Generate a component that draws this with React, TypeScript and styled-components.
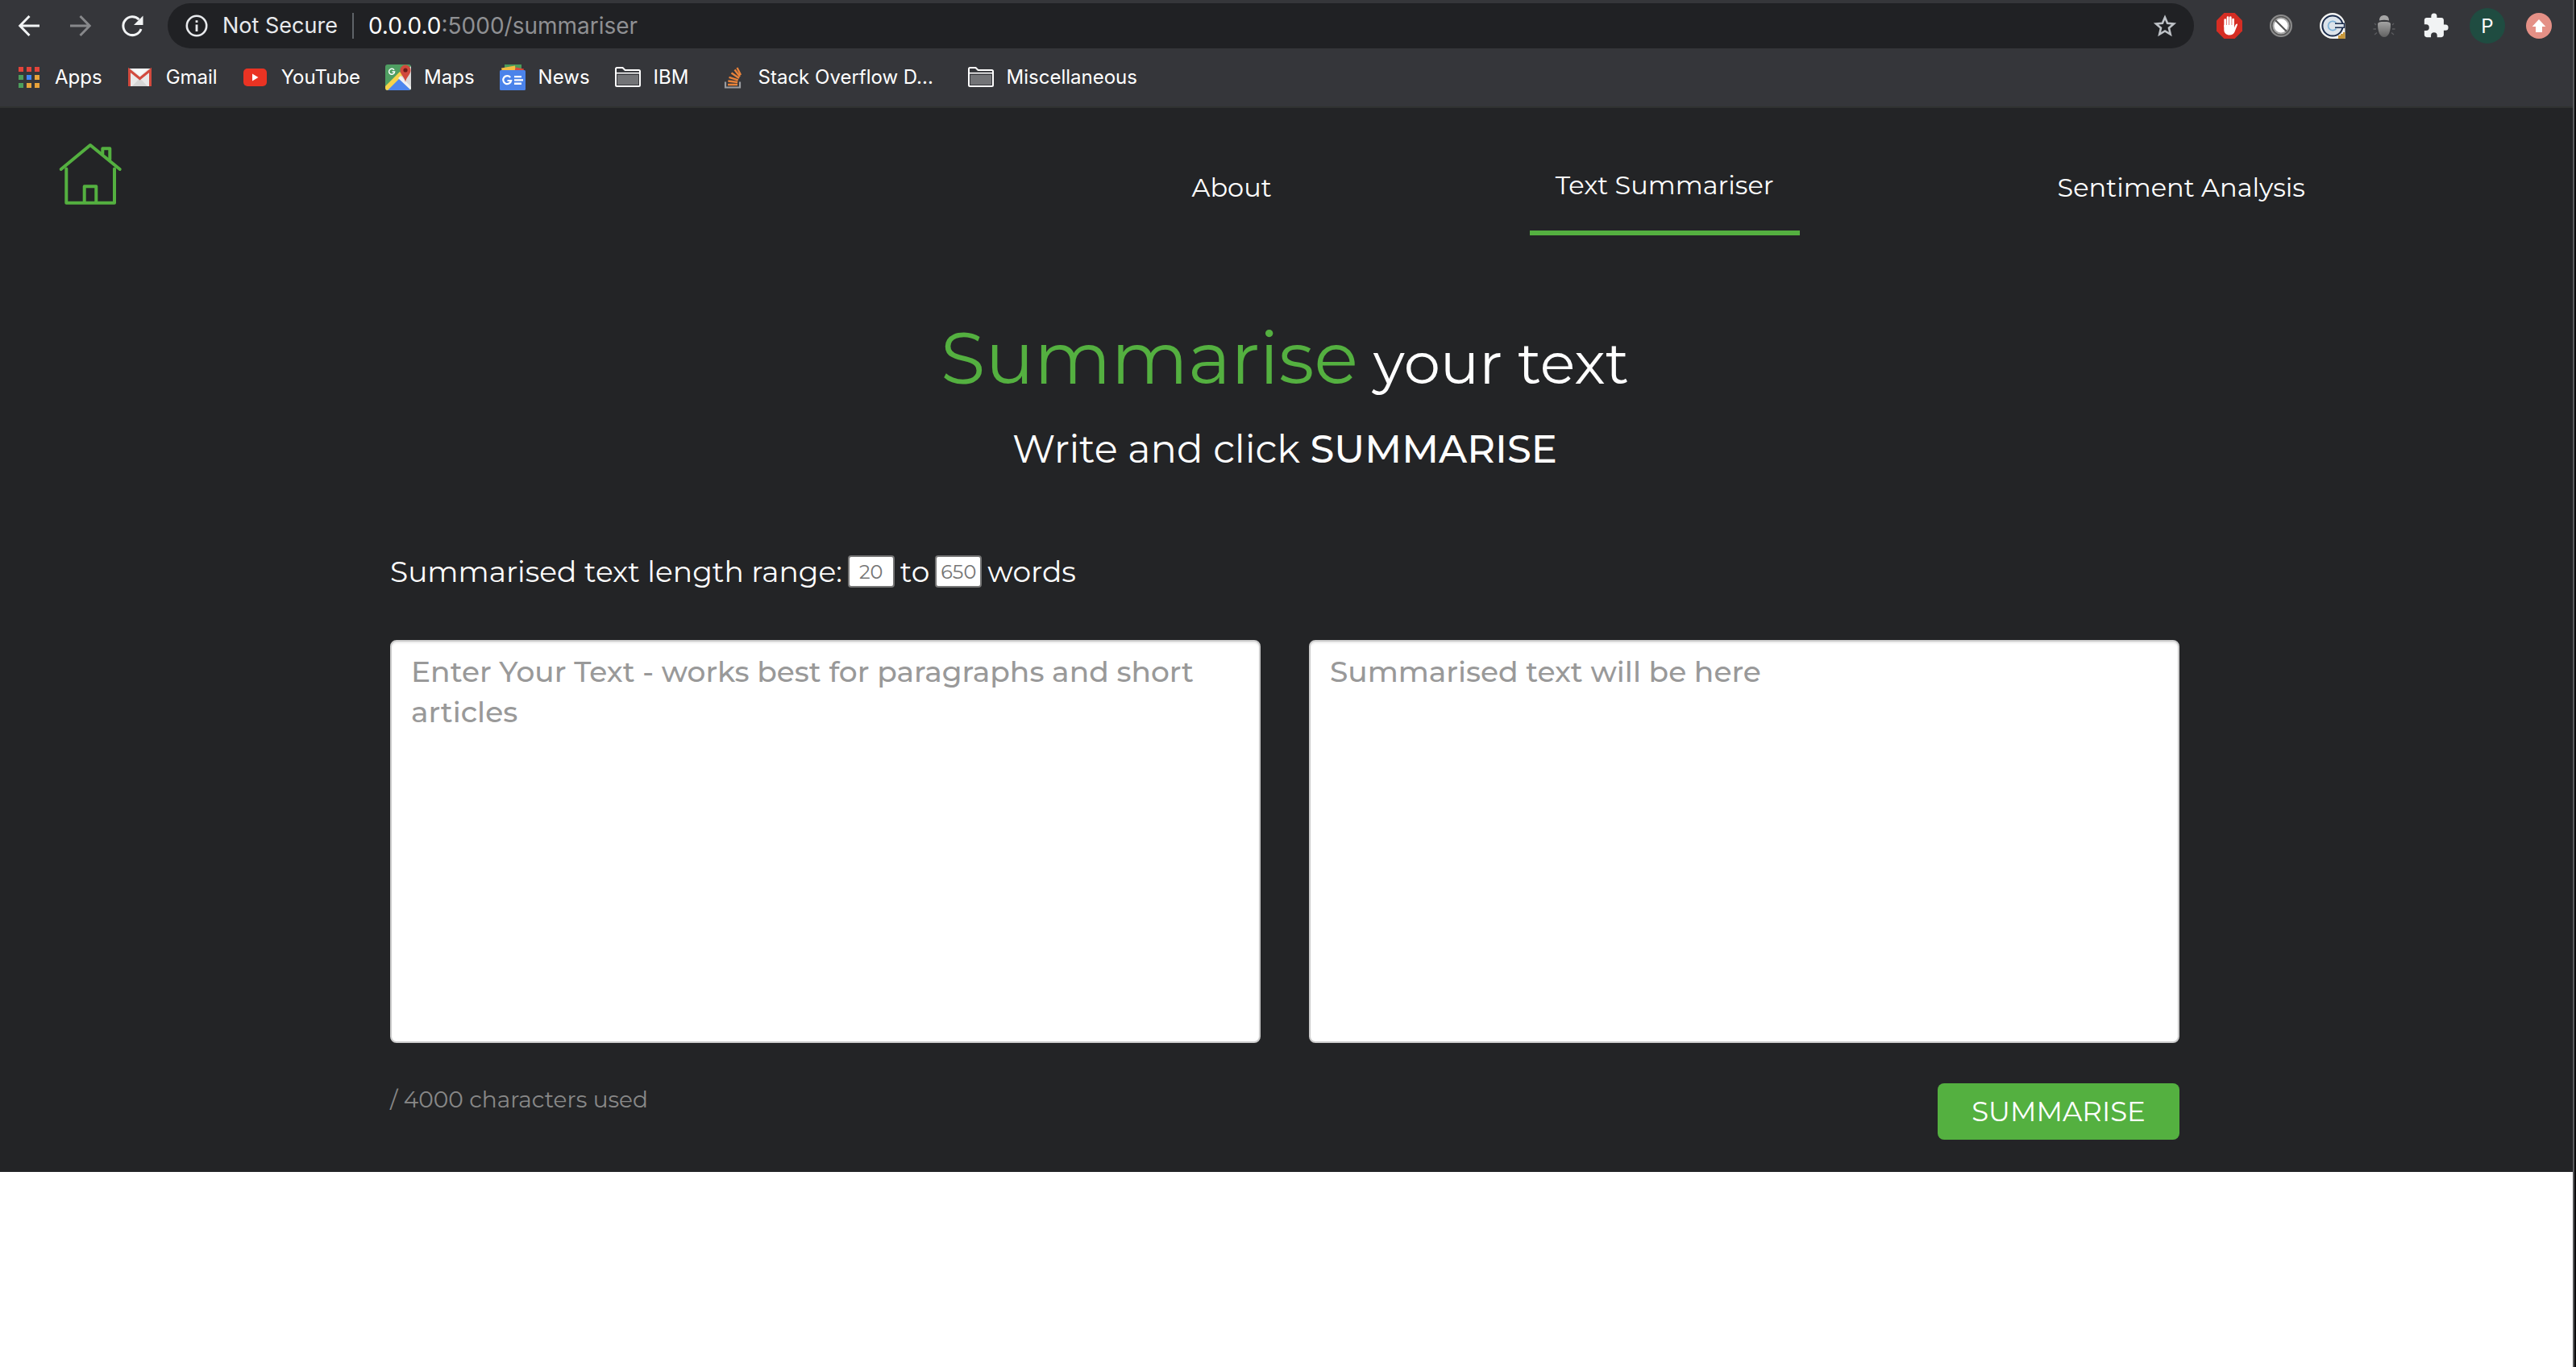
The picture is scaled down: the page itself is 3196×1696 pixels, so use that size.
import React from "react";
import styled, { createGlobalStyle } from "styled-components";

const GREEN = "#54b040";
const DARK = "#232426";
const CHROME_FONT = `Inter, "Liberation Sans", sans-serif`;
const PAGE_FONT = `Montserrat, "DejaVu Sans", sans-serif`;

const GlobalStyle = createGlobalStyle`
  *, *::before, *::after { box-sizing: border-box; }
  body { margin: 0; background: #ffffff; }
  svg { display: block; }
`;

const Window = styled.div`
  display: flex;
  min-height: 100vh;
`;

const Screen = styled.div`
  flex: 1;
  min-width: 0;
`;

const WindowEdge = styled.div`
  flex: none;
  width: 4px;
  background: #0b0b0c;
  border-left: 2px solid #57585a;
`;

/* ---------- Browser chrome ---------- */

const Browser = styled.header`
  background: #35363a;
  border-bottom: 2px solid #303231;
  color: #ffffff;
  font-family: ${CHROME_FONT};
`;

const Toolbar = styled.div`
  display: flex;
  align-items: center;
  height: 64px;
  padding: 0 20px;
`;

const IconButton = styled.button<{ $size?: number }>`
  display: flex;
  flex: none;
  align-items: center;
  justify-content: center;
  width: ${(p) => p.$size ?? 32}px;
  height: ${(p) => p.$size ?? 32}px;
  padding: 0;
  border: 0;
  background: none;
  color: inherit;
`;

const History = styled.div`
  display: flex;
  gap: 32px;
  margin-right: 28px;
`;

const Omnibox = styled.div`
  display: flex;
  flex: 1;
  align-items: center;
  gap: 18px;
  height: 56px;
  padding: 0 20px;
  border-radius: 28px;
  background: #202124;
  font-size: 28px;
  line-height: 32px;
`;

const Security = styled.span`
  color: #e8eaed;
  font-size: 27px;
`;

const Divider = styled.span`
  width: 2px;
  height: 32px;
  background: #5f6368;
`;

const Url = styled.span`
  flex: 1;
  color: #ffffff;
`;

const UrlPath = styled.span`
  color: #8f9093;
`;

const Extensions = styled.div`
  display: flex;
  gap: 20px;
  margin-left: 22px;
`;

const Profile = styled.button`
  width: 44px;
  height: 44px;
  padding: 0;
  border: 0;
  border-radius: 50%;
  background: #1f4c41;
  color: #ffffff;
  font: 24px ${CHROME_FONT};
`;

const Bookmarks = styled.nav`
  display: flex;
  gap: 31px;
  height: 68px;
  padding: 0 20px 4px;
  align-items: center;
`;

const Bookmark = styled.a<{ $minWidth?: number }>`
  display: flex;
  align-items: center;
  gap: 16px;
  min-width: ${(p) => p.$minWidth ?? 0}px;
  color: #ffffff;
  font-size: 24px;
  line-height: 32px;
  text-decoration: none;
  white-space: nowrap;
`;

/* ---------- Page ---------- */

const Page = styled.div`
  padding-right: 4px;
  padding-bottom: 40px;
  background: ${DARK};
  color: #ffffff;
  font-family: ${PAGE_FONT};
`;

const SiteHeader = styled.header`
  display: flex;
  align-items: flex-start;
  justify-content: space-between;
  padding: 40px 296px 0 72px;
`;

const HomeLink = styled.a`
  color: ${GREEN};
`;

const SiteNav = styled.nav`
  display: flex;
  align-items: center;
  gap: 288px;
`;

const NavLink = styled.a<{ $active?: boolean }>`
  padding: 32px;
  border-bottom: ${(p) => (p.$active ? `6px solid ${GREEN}` : "0")};
  color: #ffffff;
  font-size: 32px;
  line-height: 48px;
  text-decoration: none;
`;

const Main = styled.main`
  max-width: 2280px;
  margin: 0 auto;
  padding: 98px 30px 0;
`;

const Title = styled.h1`
  margin: 0;
  font-size: 72px;
  font-weight: 400;
  line-height: 1.2;
  text-align: center;
`;

const TitleAccent = styled.span`
  color: ${GREEN};
  font-size: 90px;
`;

const Subtitle = styled.p`
  margin: 30px 0 0;
  font-size: 48px;
  line-height: 58px;
  text-align: center;
`;

const Strong = styled.strong`
  font-weight: 500;
`;

const Range = styled.div`
  display: flex;
  align-items: center;
  gap: 7px;
  margin-top: 101px;
  font-size: 36px;
  line-height: 44px;
`;

const RangeInput = styled.input`
  width: 58px;
  height: 40px;
  padding: 0;
  border: 2px solid #767676;
  border-radius: 4px;
  background: #ffffff;
  color: #333333;
  font: 24px ${PAGE_FONT};
  text-align: center;
  &::placeholder { color: #757575; opacity: 1; }
`;

const Panels = styled.div`
  display: grid;
  grid-template-columns: 1fr 1fr;
  gap: 60px;
  margin-top: 63px;
`;

const TextPanel = styled.textarea`
  display: block;
  width: 100%;
  height: 500px;
  padding: 12px 24px;
  border: 2px solid #cccccc;
  border-radius: 8px;
  background: #ffffff;
  box-shadow: inset 0 2px 2px rgba(0, 0, 0, 0.075);
  color: #333333;
  font: 500 36px/50px ${PAGE_FONT};
  resize: none;
  &::placeholder { color: #999999; opacity: 1; }
`;

const Actions = styled.div`
  display: flex;
  align-items: flex-start;
  justify-content: space-between;
  margin-top: 50px;
`;

const Counter = styled.span`
  color: #888888;
  font-size: 28px;
  line-height: 40px;
`;

const Submit = styled.button`
  width: 300px;
  height: 70px;
  padding: 0;
  border: 0;
  border-radius: 8px;
  background: ${GREEN};
  color: #ffffff;
  font: 400 34px ${PAGE_FONT};
`;

/* ---------- Drawings ---------- */

const BackIcon = () => (
  <svg width="32" height="32" viewBox="0 0 32 32" fill="none" stroke="#f1f3f4" strokeWidth="3">
    <path d="M29 16H5M16.5 4 4.8 16l11.700 12" />
  </svg>
);
const ForwardIcon = () => (
  <svg width="32" height="32" viewBox="0 0 32 32" fill="none" stroke="#87888b" strokeWidth="3">
    <path d="M3 16h24M15.500 4 27.200 16l-11.700 12" />
  </svg>
);
const ReloadIcon = () => (
  <svg width="32" height="32" viewBox="0 0 32 32">
    <path d="M24.500 8.300A11.400 11.400 0 1 0 27 20" fill="none" stroke="#f1f3f4" strokeWidth="3" />
    <path d="M29.500 3.500V15H18z" fill="#f1f3f4" />
  </svg>
);
const InfoIcon = () => (
  <svg width="30" height="30" viewBox="0 0 30 30">
    <circle cx="16" cy="15" r="12.200" fill="none" stroke="#e8eaed" strokeWidth="2.600" />
    <path d="M14.600 8.200h2.800V11h-2.800zM14.600 13.400h2.800V22h-2.800z" fill="#e8eaed" />
  </svg>
);
const StarIcon = () => (
  <svg width="32" height="32" viewBox="0 0 32 32" fill="none" stroke="#bdc1c6" strokeWidth="2.600">
    <path d="M16 5.500l3.100 7.300 7.900.7-6 5.200 1.800 7.800-6.800-4.100-6.800 4.100 1.800-7.800-6-5.200 7.900-.7z" />
  </svg>
);
const AdBlockIcon = () => (
  <svg width="32" height="32" viewBox="0 0 32 32">
    <path d="M9.400 0h13.200L32 9.400v13.200L22.600 32H9.400L0 22.600V9.400z" fill="#d52d23" />
    <g stroke="#fff" strokeWidth="2.700" strokeLinecap="round" fill="none">
      <path d="M10.700 17V8.500M14 16V5.700M17.300 16V5.700M20.600 17V8" />
    </g>
    <path d="M9.300 15h12.700v3.500c1-3 2-4.800 3.200-4.900.8 0 .9.700.6 1.600L22.500 23.500c-1 2.500-3.500 4-6.300 4-4 0-6.900-2.500-6.900-6.500z" fill="#fff" />
  </svg>
);
const BlockedIcon = () => (
  <svg width="30" height="30" viewBox="0 0 30 30">
    <circle cx="15" cy="15" r="13" fill="#555" stroke="#8b8b8b" strokeWidth="2" />
    <circle cx="15" cy="15" r="9.500" fill="#fff" stroke="#a9a9a9" strokeWidth="2" />
    <path d="M8 8 22 22" stroke="#555" strokeWidth="2.200" />
  </svg>
);
const CIcon = () => (
  <svg width="32" height="32" viewBox="0 0 32 32">
    <path d="M16 0a16 16 0 1 0 0 32h15.500V16A15.700 15.700 0 0 0 16 0z" fill="#f4f4f2" />
    <circle cx="16" cy="16" r="12.600" fill="#dce3ea" stroke="#1b2c4c" strokeWidth="2" />
    <path d="M20.500 12.500a5.600 5.600 0 1 0 0 7" fill="none" stroke="#7fb2d8" strokeWidth="1.800" />
    <path d="M19 13.300h11.500v5H19" fill="#dce3ea" stroke="#1b2c4c" strokeWidth="1.400" />
    <path d="M31.500 24v8H23v-4h3v-2h3v-2z" fill="#c9983a" />
  </svg>
);
const BugIcon = () => (
  <svg width="32" height="32" viewBox="0 0 32 32">
    <defs>
      <linearGradient id="bugShell" x1="0" y1="0" x2="0" y2="1">
        <stop offset="0" stopColor="#a3a3a3" />
        <stop offset="1" stopColor="#616161" />
      </linearGradient>
    </defs>
    <path d="M10 9.500C10 5 12.500 3 16 3s6 2 6 6.500c-4-1-8-1-12 0z" fill="#a6a6a6" />
    <path d="M8 14c0-2.500 3-3 8-3s8 .5 8 3c0 9-2.500 16-8 16S8 23 8 14z" fill="url(#bugShell)" />
    <path d="M6 15l-2-2M26 15l2-2M6 20H2.500M26 20h3.500M7 24.500 4 27M25 24.500l3 2.500" stroke="#5b5c5f" strokeWidth="1.300" />
  </svg>
);
const PuzzleIcon = () => (
  <svg width="34" height="34" viewBox="0 0 24 24" fill="#f1f3f4">
    <path d="M20.500 11H19V7c0-1.100-.9-2-2-2h-4V3.500a2.500 2.500 0 0 0-5 0V5H4c-1.100 0-2 .9-2 2v3.800h1.500a2.700 2.700 0 0 1 0 5.400H2V20c0 1.100.9 2 2 2h3.800v-1.500a2.700 2.700 0 0 1 5.400 0V22H17c1.100 0 2-.9 2-2v-4h1.500a2.500 2.500 0 0 0 0-5z" />
  </svg>
);
const UpdateIcon = () => (
  <svg width="32" height="32" viewBox="0 0 32 32">
    <circle cx="16" cy="16" r="16" fill="#e49086" />
    <path d="M16 8l8.300 9H20v7h-8v-7H7.700z" fill="#fff" />
  </svg>
);

const AppsIcon = () => {
  const colors = ["#e2443a", "#e2443a", "#e2443a", "#4d9e5c", "#4285f4", "#e8a33a", "#4d9e5c", "#e8a33a", "#e8a33a"];
  return (
    <svg width="32" height="32" viewBox="0 0 32 32">
      {colors.map((c, i) => (
        <rect key={i} x={3 + (i % 3) * 10} y={3 + Math.floor(i / 3) * 10} width="6" height="6" fill={c} />
      ))}
    </svg>
  );
};
const GmailIcon = () => (
  <svg width="32" height="32" viewBox="0 0 32 32">
    <rect x="1" y="5" width="29" height="22" rx="2" fill="#e9e9e9" />
    <path d="M6 27 15.500 17 25 27z" fill="#d6d6d6" />
    <path d="M5 5h21L15.500 14.500z" fill="#f7f7f7" />
    <path d="M2.500 27V7l13 10.500L28.500 7v20" fill="none" stroke="#d24a3e" strokeWidth="3" />
  </svg>
);
const YouTubeIcon = () => (
  <svg width="32" height="32" viewBox="0 0 32 32">
    <rect x="1" y="5" width="29" height="22" rx="5" fill="#ea3323" />
    <path d="M12 11.500v9l7.500-4.500z" fill="#fff" />
  </svg>
);
const MapsIcon = () => (
  <svg width="32" height="32" viewBox="0 0 32 32">
    <clipPath id="mapTile"><rect width="32" height="32" rx="3" /></clipPath>
    <g clipPath="url(#mapTile)">
      <rect width="32" height="32" fill="#4f9e62" />
      <path d="M16 17 32 2v30z" fill="#d9d9d9" />
      <path d="M0 32 16.500 16 32 32z" fill="#4d86ee" />
      <path d="M0 32v-5L18 9l4 4L3 32z" fill="#f6d34c" />
      <path d="M16 17l3-3 13 14v4z" fill="#f2f2f2" />
    </g>
    <path d="M11 6.800a3.500 3.500 0 1 0 .6 2.200H8.500" fill="none" stroke="#fff" strokeWidth="1.500" />
    <path d="M25 22c-.5-6-6.500-9-6.500-15a6.500 6.500 0 0 1 13 0c0 6-6 9-6.500 15z" fill="#d0493c" />
    <circle cx="25" cy="7" r="2.600" fill="#6b1d18" />
  </svg>
);
const NewsIcon = () => (
  <svg width="32" height="32" viewBox="0 0 32 32">
    <path d="M6 0h21v8H6z" fill="#4a9c59" />
    <path d="M2 4.500 19 1.500 20 9H3z" fill="#f3bc42" />
    <path d="M20 3.500l10 2L29 9H18z" fill="#d8493c" />
    <rect y="7" width="32" height="25" rx="1.500" fill="#4b83ea" />
    <path d="M13.200 16a5 5 0 1 0 1 4H9.500" fill="none" stroke="#fff" strokeWidth="2.200" />
    <path d="M18 14h9v2.300h-9zM18 18.300h11v2.300H18zM18 22.600h9v2.300h-9z" fill="#fff" />
  </svg>
);
const FolderIcon = () => (
  <svg width="32" height="32" viewBox="0 0 32 32">
    <path d="M1 5.500Q1 4 2.500 4h7l3 3h17Q31 7 31 8.500v17q0 1.500-1.500 1.500h-27Q1 27 1 25.500z" fill="none" stroke="#fff" strokeWidth="2" />
    <path d="M2 10.700h28" stroke="#fff" strokeWidth="1.600" />
    <path d="M3 13h26v12H3z" fill="#737477" />
  </svg>
);
const StackIcon = () => (
  <svg width="32" height="32" viewBox="0 0 32 32" fill="none">
    <path d="M7 21.500v7h18v-7" stroke="#9a9ca0" strokeWidth="2.200" />
    <path d="M10 25h12M10.300 20.500l11.800 1.500M11.500 15.800l11.200 3.500M14.500 10.500l9.500 6.500M18.500 6.500l6.500 8.500M21.500 4l4.500 9" stroke="#e8823a" strokeWidth="2.400" />
  </svg>
);
const HouseIcon = () => (
  <svg width="80" height="84" viewBox="0 0 80 84" fill="none" stroke="currentColor" strokeWidth="4" strokeLinecap="round" strokeLinejoin="round">
    <path d="M3.700 36 40 6l36.700 30" />
    <path d="M10.300 35.500v42.200H70V35.500" />
    <path d="M32.700 77V57.300h14.600V77" />
    <path d="M55.300 17v-6.700h9V24" />
  </svg>
);

const bookmarks = [
  { label: "Apps", Icon: AppsIcon },
  { label: "Gmail", Icon: GmailIcon },
  { label: "YouTube", Icon: YouTubeIcon },
  { label: "Maps", Icon: MapsIcon },
  { label: "News", Icon: NewsIcon },
  { label: "IBM", Icon: FolderIcon, minWidth: 99 },
  { label: "Stack Overflow D...", Icon: StackIcon, minWidth: 277 },
  { label: "Miscellaneous", Icon: FolderIcon },
];

const extensions = [
  { name: "Ad blocker", Icon: AdBlockIcon },
  { name: "Content blocker", Icon: BlockedIcon },
  { name: "Citations", Icon: CIcon },
  { name: "Bug tracker", Icon: BugIcon },
  { name: "Extensions", Icon: PuzzleIcon },
];

export default function App() {
  return (
    <Window>
      <GlobalStyle />
      <Screen>
        <Browser>
          <Toolbar>
            <History>
              <IconButton aria-label="Back"><BackIcon /></IconButton>
              <IconButton aria-label="Forward"><ForwardIcon /></IconButton>
              <IconButton aria-label="Reload"><ReloadIcon /></IconButton>
            </History>
            <Omnibox>
              <InfoIcon />
              <Security>Not Secure</Security>
              <Divider />
              <Url>0.0.0.0<UrlPath>:5000/summariser</UrlPath></Url>
              <IconButton aria-label="Bookmark this page"><StarIcon /></IconButton>
            </Omnibox>
            <Extensions>
              {extensions.map(({ name, Icon }) => (
                <IconButton key={name} $size={44} aria-label={name}><Icon /></IconButton>
              ))}
              <Profile aria-label="Profile">P</Profile>
              <IconButton $size={44} aria-label="Update"><UpdateIcon /></IconButton>
            </Extensions>
          </Toolbar>
          <Bookmarks>
            {bookmarks.map(({ label, Icon, minWidth }) => (
              <Bookmark key={label} href="#" $minWidth={minWidth}><Icon />{label}</Bookmark>
            ))}
          </Bookmarks>
        </Browser>
        <Page>
          <SiteHeader>
            <HomeLink href="#" aria-label="Home"><HouseIcon /></HomeLink>
            <SiteNav>
              <NavLink href="#">About</NavLink>
              <NavLink href="#" $active>Text Summariser</NavLink>
              <NavLink href="#">Sentiment Analysis</NavLink>
            </SiteNav>
          </SiteHeader>
          <Main>
            <Title><TitleAccent>Summarise</TitleAccent> your text</Title>
            <Subtitle>Write and click <Strong>SUMMARISE</Strong></Subtitle>
            <Range>
              <label htmlFor="min-words">Summarised text length range:</label>
              <RangeInput id="min-words" placeholder="20" />
              <label htmlFor="max-words">to</label>
              <RangeInput id="max-words" placeholder="650" />
              <span>words</span>
            </Range>
            <Panels>
              <TextPanel aria-label="Your text" placeholder="Enter Your Text - works best for paragraphs and short articles" />
              <TextPanel aria-label="Summary" placeholder="Summarised text will be here" readOnly />
            </Panels>
            <Actions>
              <Counter>/ 4000 characters used</Counter>
              <Submit>SUMMARISE</Submit>
            </Actions>
          </Main>
        </Page>
      </Screen>
      <WindowEdge />
    </Window>
  );
}
